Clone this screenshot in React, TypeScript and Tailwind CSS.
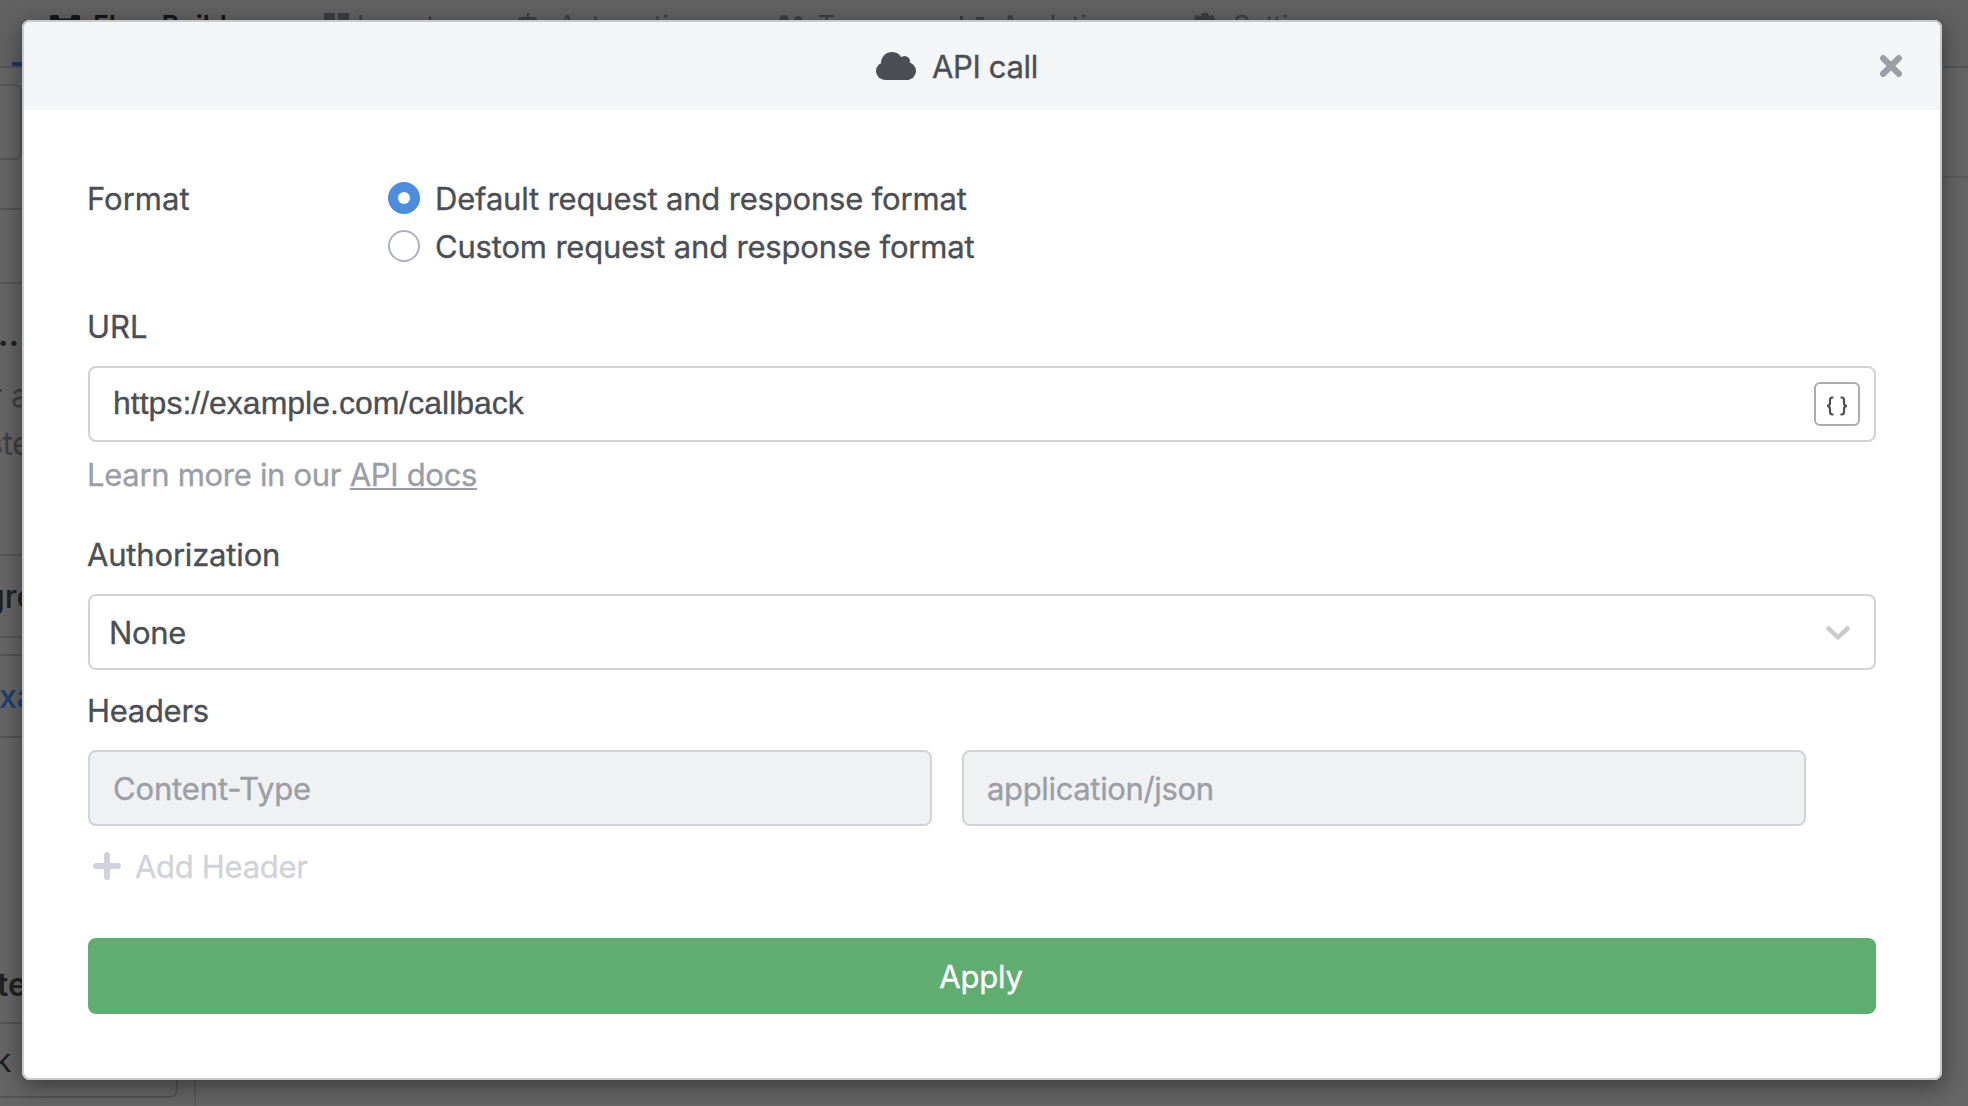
import React from "react";

const TABS = [
  { label: "Flow Builder", icon: "flow", box: "w-[274px] gap-[13px]", tone: "text-[#141618] font-semibold" },
  { label: "Inventory", icon: "grid", box: "w-[193px] gap-[3px]", tone: "text-[#3c3e41]" },
  { label: "Automations", icon: "bot", box: "w-[261px] gap-[11px] tracking-[-0.4px]", tone: "text-[#3c3e41]" },
  { label: "Team", icon: "team", box: "w-[177px] gap-[10px]", tone: "text-[#3c3e41]" },
  { label: "Analytics", icon: "chart", box: "w-[238px] gap-[16px] tracking-[-0.3px]", tone: "text-[#3c3e41]" },
  { label: "Settings", icon: "gear", box: "w-[238px] gap-[10px] tracking-[-0.3px]", tone: "text-[#3c3e41]" },
];

function TabIcon({ name }: { name: string }) {
  return (
    <svg className="mt-[2px] h-6 w-[30px] shrink-0" viewBox="0 0 30 24" fill="currentColor">
      {name === "flow" && <path d="M2 2h5a2 2 0 0 1 2 2v1.500h12V4a2 2 0 0 1 2-2h5a2 2 0 0 1 2 2v6H21V8.500H9V10H0V4a2 2 0 0 1 2-2zM11 15h8v8h-8z" />}
      {name === "grid" && <path d="M0 0h11v11H0zM14 0h11v11H14zM0 14h11v10H0zM14 14h11v10H14z" />}
      {name === "bot" && <path d="M9.500 0h2.500v4h5a3 3 0 0 1 3 3v14H1V7a3 3 0 0 1 3-3h5.500z" />}
      {name === "team" && <path d="M6 2a5 5 0 0 1 5 5v6H1V7a5 5 0 0 1 5-5zM20 3a4 4 0 0 1 4 4v5h-8V7a4 4 0 0 1 4-4z" />}
      {name === "chart" && <path d="M5 3h3v20H5zM21 4h8v4h-8z" />}
      {name === "gear" && <path d="M9 0h6l1 3 4-1 2 4v12H1V6l2-4 5 1z" />}
    </svg>
  );
}

function Backdrop() {
  return (
    <div className="flex h-full flex-col overflow-hidden bg-[#666666]">
      <div className="flex h-[68px] shrink-0 flex-col justify-between border-b-2 border-[#555657] bg-[#626262]">
        <div className="flex items-start pl-[50px] pt-[11px] text-[27px] leading-[30px]">
          {TABS.map((t) => (
            <div key={t.label} className={`flex shrink-0 items-start whitespace-nowrap ${t.box} ${t.tone}`}>
              <TabIcon name={t.icon} />
              <span>{t.label}</span>
            </div>
          ))}
        </div>
        <div className="ml-3 h-1 w-60 shrink-0 bg-[#1f3a62]" />
      </div>
      <div className="flex flex-1">
        <div className="flex w-[196px] shrink-0 flex-col border-r-2 border-[#5a5b5c] text-[32px] leading-10 text-[#1f2123]">
          <div className="mt-4 h-[76px] w-[22px] shrink-0 rounded-r-lg border-2 border-l-0 border-[#555657]" />
          <div className="mt-12 h-[76px] shrink-0 border-y-2 border-[#555657]" />
          <div className="-ml-[13px] mt-[31px] h-10 font-bold">...</div>
          <div className="-ml-[10px] mt-[17px] h-12 leading-12 text-[#3e4043]">r and</div>
          <div className="-ml-[14px] h-12 leading-12 tracking-[-0.5px] text-[#3e4043]">step</div>
          <div className="mt-[86px] h-[84px] shrink-0 border-y-2 border-[#555657] leading-[82px]">
            <span className="-ml-[15px] font-medium">green</span>
          </div>
          <div className="mt-4 h-[84px] shrink-0 border-y-2 border-[#555657] leading-[82px] text-[#203f70]">
            <span className="-ml-px font-medium">xample</span>
          </div>
          <div className="-ml-[3px] mt-[227px] h-[57px] font-semibold">tem</div>
          <div className="h-[76px] w-[178px] shrink-0 rounded-br-lg border-2 border-l-0 border-[#555657] leading-[74px]">
            <span className="-ml-[6px]">k</span>
          </div>
        </div>
        <div className="flex-1">
          <div className="h-[110px] border-b-2 border-[#5a5b5c]" />
        </div>
      </div>
    </div>
  );
}

function Radio({ checked, label }: { checked?: boolean; label: string }) {
  return (
    <label className="flex h-12 items-center gap-[15px]">
      <span
        className={
          checked
            ? "flex size-8 items-center justify-center rounded-full bg-[#4c8ddf]"
            : "size-8 rounded-full border-2 border-[#adb3bc] bg-white"
        }
      >
        {checked && <span className="size-3 rounded-full bg-white" />}
      </span>
      <span className="whitespace-nowrap pt-[2px] tracking-[-0.18px]">{label}</span>
    </label>
  );
}

function Modal() {
  return (
    <div className="absolute left-[22px] top-5 flex h-[1060px] w-[1920px] flex-col overflow-hidden rounded-lg bg-white ring-2 ring-inset ring-[#c8c9cb] shadow-[0_6px_24px_rgba(0,0,0,0.45)]">
      <div className="m-[2px] mb-0 flex h-[88px] shrink-0 items-center rounded-t-md bg-[#f4f5f7]">
        <div className="ml-[852px] flex items-center gap-4">
          <svg className="h-7 w-10" viewBox="0 0 40 28" fill="#4b4f54">
            <circle cx="16" cy="11" r="11" />
            <circle cx="28.500" cy="9.500" r="5.500" />
            <circle cx="9" cy="19" r="9" />
            <circle cx="31" cy="19" r="9" />
            <path d="M9 12h24v16H9z" />
          </svg>
          <h1 className="pt-[2px] tracking-[-0.35px]">API call</h1>
        </div>
        <button className="ml-auto mr-[38px]" aria-label="Close">
          <svg className="size-[22px]" viewBox="0 0 22 22" stroke="#9b9ea5" strokeWidth="6.200" strokeLinecap="round">
            <path d="M3.200 3.200l15.600 15.600M18.800 3.200l-15.600 15.600" />
          </svg>
        </button>
      </div>
      <div className="flex flex-col px-[66px] pt-16">
        <div className="flex">
          <div className="-ml-px h-12 w-[301px] leading-[50px] tracking-normal">Format</div>
          <div>
            <Radio checked label="Default request and response format" />
            <Radio label="Custom request and response format" />
          </div>
        </div>
        <div className="-ml-px mt-8 h-12 leading-[50px] tracking-normal">URL</div>
        <div className="mt-4 flex h-[76px] items-center justify-between rounded-lg border-2 border-[#d0d4da] pl-[23px] pr-[14px]">
          <span className="pb-[2px] font-['Liberation_Sans',sans-serif] text-[32px] tracking-normal">https://example.com/callback</span>
          <button className="flex h-11 w-[46px] items-center justify-center rounded-md border-2 border-[#aaabad] pr-px pt-1" aria-label="Insert variable">
            <svg className="h-5 w-[22px]" viewBox="0 0 22 20" fill="none" stroke="#4b4f54" strokeWidth="2.200">
              <path d="M7.500 1.500H6.500Q4 1.500 4 4v3Q4 10 1 10Q4 10 4 13v3Q4 18.500 6.500 18.500h1M14.500 1.500h1Q18 1.500 18 4v3Q18 10 21 10Q18 10 18 13v3Q18 18.500 15.500 18.500h-1" />
            </svg>
          </button>
        </div>
        <div className="-ml-px mt-[9px] h-12 leading-12 tracking-[-0.3px] text-[#9b9ea5]">
          Learn more in our <a className="underline decoration-2 underline-offset-[2px]">API docs</a>
        </div>
        <div className="-ml-px mt-8 h-12 leading-12 tracking-[-0.18px]">Authorization</div>
        <div className="mt-[15px] flex h-[76px] items-center justify-between rounded-lg border-2 border-[#d0d4da] pl-[19px] pr-6 pt-[2px]">
          <span>None</span>
          <svg className="h-[14px] w-6" viewBox="0 0 24 14" fill="none" stroke="#cacbcc" strokeWidth="4.500" strokeLinecap="round" strokeLinejoin="round">
            <path d="M2.500 2.500L12 11.300L21.500 2.500" />
          </svg>
        </div>
        <div className="-ml-px mt-4 h-12 leading-[50px]">Headers</div>
        <div className="mt-4 mr-[70px] grid grid-cols-2 gap-[30px] text-[#9b9ea5]">
          <div className="flex h-[76px] items-center rounded-lg border-2 border-[#d0d4da] bg-[#eff1f3] pl-[23px] pt-[2px] tracking-[-0.15px]">Content-Type</div>
          <div className="flex h-[76px] items-center rounded-lg border-2 border-[#d0d4da] bg-[#eff1f3] pl-[23px] pt-[2px] tracking-[-0.35px]">application/json</div>
        </div>
        <div className="mt-4 flex h-12 items-center gap-[14px] pl-[5px] text-[#d0d3d9]">
          <svg className="size-7" viewBox="0 0 28 28" stroke="currentColor" strokeWidth="6" strokeLinecap="round">
            <path d="M14 3v22M3 14h22" />
          </svg>
          <span className="pt-px">Add Header</span>
        </div>
        <button className="mt-12 flex h-[76px] items-center justify-center rounded-lg bg-[#60ad72] pr-[2px] pt-px tracking-[-0.2px] text-white">Apply</button>
      </div>
    </div>
  );
}

export default function App() {
  return (
    <div className="relative h-[1106px] w-[1968px] overflow-hidden font-['Inter',sans-serif]">
      <Backdrop />
      <div className="text-[31px] leading-12 tracking-[-0.3px] text-[#4b4f54] [-webkit-text-stroke:0.35px_currentColor]">
        <Modal />
      </div>
    </div>
  );
}
